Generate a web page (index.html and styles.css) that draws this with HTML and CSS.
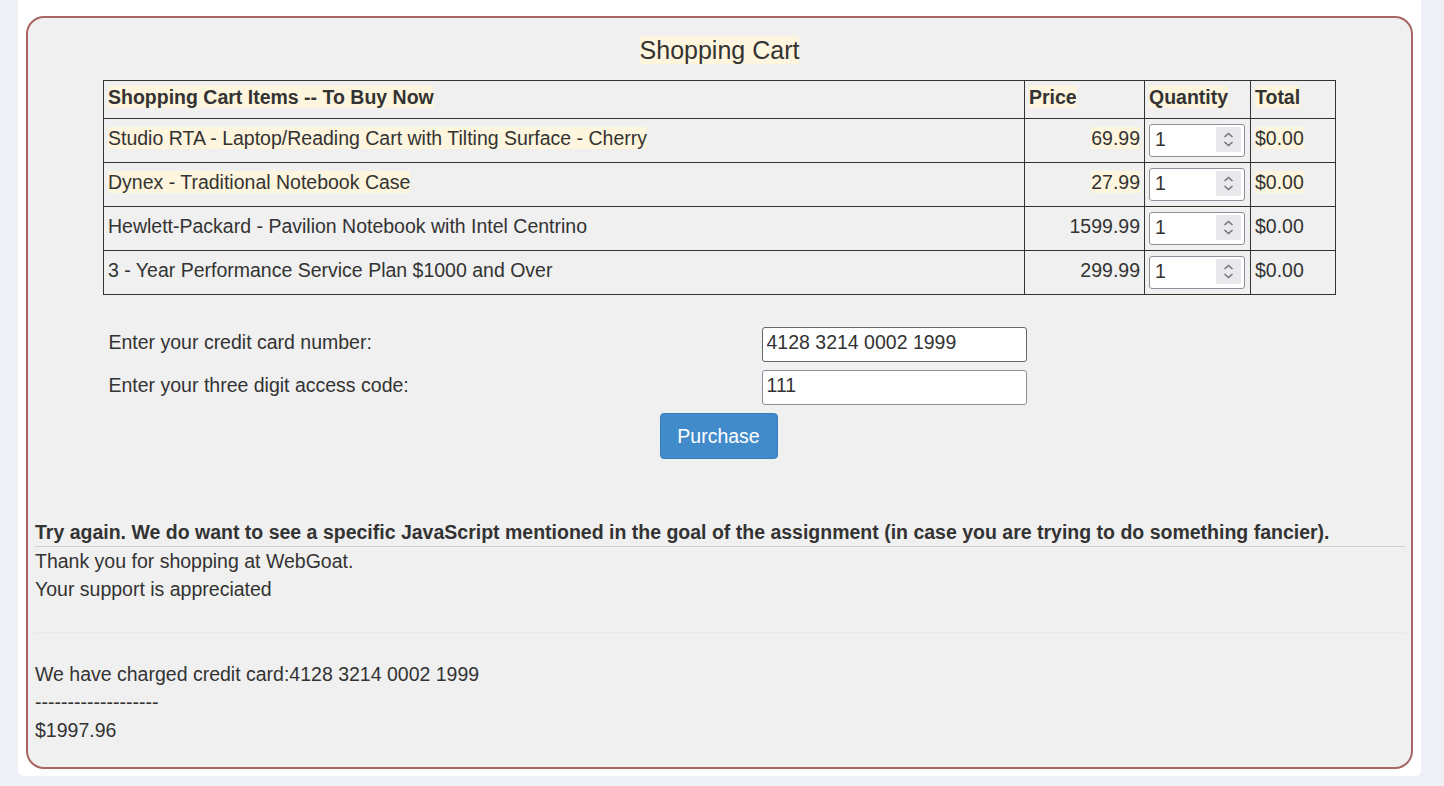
FILE: index.html
```html
<!DOCTYPE html>
<html>
<head>
<meta charset="utf-8">
<title>Shopping Cart</title>
<link rel="stylesheet" href="styles.css">
</head>
<body>
<div class="page">
  <div class="lesson">
    <div class="title"><span class="hl">Shopping Cart</span></div>
    <table class="cart">
      <colgroup>
        <col class="c-name"><col class="c-price"><col class="c-qty"><col class="c-total">
      </colgroup>
      <thead>
        <tr>
          <th><span class="hl">Shopping Cart Items -- To Buy Now</span></th>
          <th><span class="hl">Price</span></th>
          <th><span class="hl">Quantity</span></th>
          <th><span class="hl">Total</span></th>
        </tr>
      </thead>
      <tbody>
        <tr>
          <td><span class="hl">Studio RTA - Laptop/Reading Cart with Tilting Surface - Cherry</span></td>
          <td class="num"><span class="hl">69.99</span></td>
          <td class="qty"><span class="qwrap"><input class="qin" type="text" value="1"><span class="spin"><svg viewBox="0 0 25 25" width="25" height="25"><path d="M8.5 10 L12.5 6.5 L16.5 10" fill="none" stroke="#6f6f78" stroke-width="1.4"/><path d="M8.5 15 L12.5 18.5 L16.5 15" fill="none" stroke="#6f6f78" stroke-width="1.4"/></svg></span></span></td>
          <td><span class="hl">$0.00</span></td>
        </tr>
        <tr>
          <td><span class="hl">Dynex - Traditional Notebook Case</span></td>
          <td class="num"><span class="hl">27.99</span></td>
          <td class="qty"><span class="qwrap"><input class="qin" type="text" value="1"><span class="spin"><svg viewBox="0 0 25 25" width="25" height="25"><path d="M8.5 10 L12.5 6.5 L16.5 10" fill="none" stroke="#6f6f78" stroke-width="1.4"/><path d="M8.5 15 L12.5 18.5 L16.5 15" fill="none" stroke="#6f6f78" stroke-width="1.4"/></svg></span></span></td>
          <td><span class="hl">$0.00</span></td>
        </tr>
        <tr>
          <td>Hewlett-Packard - Pavilion Notebook with Intel Centrino</td>
          <td class="num">1599.99</td>
          <td class="qty"><span class="qwrap"><input class="qin" type="text" value="1"><span class="spin"><svg viewBox="0 0 25 25" width="25" height="25"><path d="M8.5 10 L12.5 6.5 L16.5 10" fill="none" stroke="#6f6f78" stroke-width="1.4"/><path d="M8.5 15 L12.5 18.5 L16.5 15" fill="none" stroke="#6f6f78" stroke-width="1.4"/></svg></span></span></td>
          <td>$0.00</td>
        </tr>
        <tr>
          <td>3 - Year Performance Service Plan $1000 and Over</td>
          <td class="num">299.99</td>
          <td class="qty"><span class="qwrap"><input class="qin" type="text" value="1"><span class="spin"><svg viewBox="0 0 25 25" width="25" height="25"><path d="M8.5 10 L12.5 6.5 L16.5 10" fill="none" stroke="#6f6f78" stroke-width="1.4"/><path d="M8.5 15 L12.5 18.5 L16.5 15" fill="none" stroke="#6f6f78" stroke-width="1.4"/></svg></span></span></td>
          <td>$0.00</td>
        </tr>
      </tbody>
    </table>

    <div class="pay">
      <label class="lbl">Enter your credit card number:</label>
      <input class="tin dark" type="text" value="4128 3214 0002 1999">
      <label class="lbl">Enter your three digit access code:</label>
      <input class="tin" type="text" value="111">
    </div>
    <div class="btnrow"><button class="btn">Purchase</button></div>

    <div class="feedback">
      <div class="bold">Try again. We do want to see a specific JavaScript mentioned in the goal of the assignment (in case you are trying to do something fancier).</div>
      <div class="output">
        <div>Thank you for shopping at WebGoat.</div>
        <div>Your support is appreciated</div>
        <hr class="faint">
        <div>We have charged credit card:4128 3214 0002 1999</div>
        <div>-------------------</div>
        <div>$1997.96</div>
      </div>
    </div>
  </div>
</div>
</body>
</html>
```

FILE: styles.css
```css
html, body {
  margin: 0;
  padding: 0;
}
body {
  background: #eef0f5;
  font-family: "Liberation Sans", Arial, Helvetica, sans-serif;
  font-size: 19.5px;
  line-height: 28px;
  color: #333;
}
.page {
  width: 1403px;
  margin-left: 18px;
  background: #fff;
  border-radius: 0 0 6px 6px;
  padding: 16px 8px 7px 8px;
  box-sizing: border-box;
}
.lesson {
  border: 2px solid #a86565;
  border-radius: 18px;
  background: #f0f0f0;
  padding: 0 6px 22px 6px;
  height: 753px;
  box-sizing: border-box;
}
.hl {
  background: #fdf5de;
}
.title {
  text-align: center;
  font-size: 25px;
  line-height: 28px;
  padding-top: 18px;
  margin-bottom: 16px;
}
.cart {
  width: 1232px;
  margin: 0 auto;
  border-collapse: collapse;
  table-layout: fixed;
}
.c-name { width: 921px; }
.c-price { width: 120px; }
.c-qty { width: 106px; }
.c-total { width: 85px; }
.cart th, .cart td {
  border: 1px solid #333;
  text-align: left;
  line-height: 27px;
  white-space: nowrap;
}
.cart th {
  font-weight: bold;
  padding: 3px 4px 7px;
  vertical-align: top;
}
.cart td {
  padding: 6px 4px 4px;
  vertical-align: top;
}
.cart td.qty {
  padding: 5px 4px;
}
.cart td.num {
  text-align: right;
}
.qwrap {
  position: relative;
  display: block;
  width: 96px;
  height: 33px;
}
.qin {
  box-sizing: border-box;
  width: 96px;
  height: 33px;
  font-family: "Liberation Sans", Arial, sans-serif;
  font-size: 19.5px;
  color: #333;
  padding: 0 5px 2px;
  border: 1px solid #8f8f9d;
  border-radius: 3px;
  background: #fff;
  display: block;
}
.spin {
  position: absolute;
  left: 67px;
  top: 3px;
  width: 25px;
  height: 25px;
  background: #e9e9ed;
  border-radius: 2px;
  display: block;
}
.spin svg {
  display: block;
}
.pay {
  width: 1232px;
  margin: 32px auto 0;
  padding-left: 5px;
  box-sizing: border-box;
  display: grid;
  grid-template-columns: 653px 265px;
  row-gap: 8px;
  align-items: start;
}
.lbl {
  line-height: 28px;
  padding-top: 1px;
}
.tin {
  box-sizing: border-box;
  width: 265px;
  height: 35px;
  font-family: "Liberation Sans", Arial, sans-serif;
  font-size: 19.5px;
  color: #333;
  padding: 0 4px 5px;
  border: 1px solid #8f8f9d;
  border-radius: 3px;
  background: #fff;
}
.tin.dark {
  border-color: #666;
}
.btnrow {
  text-align: center;
  margin-top: 8px;
  padding-right: 2px;
}
.btn {
  font-family: "Liberation Sans", Arial, sans-serif;
  font-size: 19.5px;
  line-height: 26px;
  color: #fff;
  background: #428bca;
  border: 1px solid #357ebd;
  border-radius: 4px;
  padding: 9px 10px;
  width: 118px;
}
.feedback {
  margin-top: 59px;
  padding-left: 1px;
}
.bold {
  font-weight: bold;
  border-bottom: 1px solid #cfcfcf;
}
.faint {
  border: 0;
  border-top: 1px solid #e8e8e8;
  margin: 29px 0 27px;
  height: 0;
}
```
